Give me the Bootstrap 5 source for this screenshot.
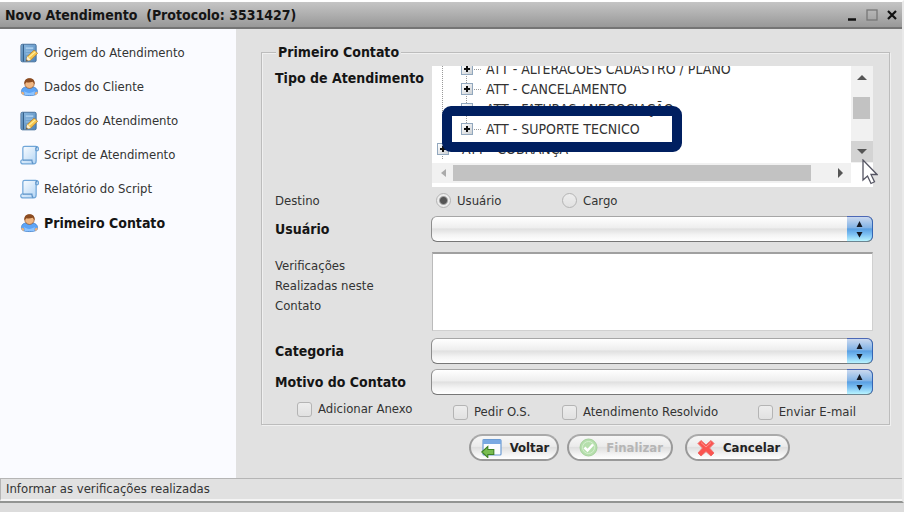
<!DOCTYPE html>
<html lang="pt-BR">
<head>
<meta charset="utf-8">
<meta name="viewport" content="width=device-width, initial-scale=1">
<title>Novo Atendimento</title>
<link href="https://cdn.jsdelivr.net/npm/bootstrap@5.3.0/dist/css/bootstrap.min.css" rel="stylesheet">
<style>
body{background:#dcdcdc;color:#333;font:13px/20px "DejaVu Sans Condensed","DejaVu Sans",sans-serif}
b,.fw-bold{color:#151515;font-size:14px}
.app-window{background:#e1e1e1;border-top:2px solid #fff;border-right:2px solid #e9e9e9;border-bottom:2px solid #929492}
.title-bar{height:27px;padding:0 2px 0 5px;background:linear-gradient(#c5c5c5,#989898);border-bottom:2px solid #747474}
.title-bar h1{line-height:20px;white-space:pre}
.title-bar button{width:16px;height:20px;line-height:0;color:#111}
.side{width:236px;background:#fafbff;padding-top:7px}
.side a{height:34px;padding-left:20px;gap:5px;color:#333;text-decoration:none}
.content-area{padding:13px 12px 17px 25px}
.group-box{border:1px solid #bcbcbc;box-shadow:inset 1px 1px #f0f0f0,1px 1px #f0f0f0;padding:4px 16px 2px 13px}
.group-box legend{float:none;width:auto;line-height:20px;margin:0 0 0 1px;padding:0 2px;background:#e1e1e1}
.field-label{width:157px;flex:none}
.top-label{padding-top:2px}
.tree-panel{background:#fff;padding-bottom:4px}
.tree-row{height:97px}
.tree-view{overflow:hidden;font-size:14px}
.tree-view ul{margin-top:-7px;position:relative}
.tree-view li{height:20px;padding-left:29px;white-space:nowrap}
.tree-view li.parent-node{padding-left:5px}
.tree-view ul::before,.tree-view ul::after{content:"";position:absolute;top:0;bottom:0;left:10px;border-left:1px dotted #999}
.tree-view ul::after{left:34px;bottom:30px}
.toggle{width:12px;height:12px;border:1px solid #92a8be;background:linear-gradient(135deg,#fff,#ccd0d4);line-height:0;z-index:1;color:#111}
.stub{width:7px;border-top:1px dotted #999;margin:0 5px 0 1px}
.vbar{width:22px;background:#f1f1f1}
.vbar button,.hbar button{height:21px;width:21px;line-height:0;color:#555}
.vbar .down{background:#d3d3d3;width:22px}
.vthumb{height:22px;margin:10px 3px 22px 2px;background:#c2c2c2}
.hbar{height:20px;background:#f1f1f1;margin-right:22px}
.hbar button{height:20px}
.hthumb{height:16px;background:#c2c2c2;margin-right:19px}
.highlight{top:40px;left:10px;width:240px;height:46px;border:10px solid #001f60;border-radius:9px;z-index:2}
.pointer{right:-5px;top:93px;z-index:3;pointer-events:none}
.destino{height:27px;margin-bottom:2px}
.gap-s{margin-bottom:5px}
.gap-m{margin-bottom:7px}
.gap-l{margin-bottom:10px}
.mac-select{height:26px;border:1px solid #8d8d8d;border-color:#a6a6a6 #8d8d8d #777;border-radius:6px;appearance:none;background:linear-gradient(#fff,#eee 45%,#e0e0e0 50%,#f4f4f4 75%,#fff);margin-left:-1px;width:calc(100% + 1px)}
.stepper{width:26px;background:linear-gradient(#cbd9ef,#84b4e6 44%,#5a9fe2 50%,#7cc0f3 72%,#b8f4ff);border:1px solid #4c68b6;border-left:0;border-bottom-color:#6c8490;border-right-color:#3465b5;border-radius:0 6px 6px 0;pointer-events:none}
.notes{height:79px;resize:none;background:#fff;border:1px solid #d0d0d0;border-top:2px solid #a0a0a0;border-left-color:#bbb}
.tick{appearance:none;width:15px;height:15px;margin:0;border:1px solid #b4b4b4;border-radius:3px;background:linear-gradient(#ededed,#e1e1e1);flex:none}
.tick:checked{background:#444}
.tick[type=radio]{border-radius:50%}
.tick[type=radio]:checked{background:radial-gradient(circle,#555 0 3px,#ececec 5px)}
.ticks{gap:6px}
.checks{padding-top:4px}
.col-a{width:130px}.col-b{width:109px}.col-c{flex:1}
.extra{padding:3px 17px 0 21px}
.attach{padding-left:22px}
.actions{padding:9px 0 0 108px}
.pill{height:27px;border:2px solid #999;border-top-color:#aaa;border-radius:14px;background:linear-gradient(#f7f7f7,#ebebeb 45%,#dfdfdf 50%,#f0f0f0 75%,#fff);font-weight:bold;line-height:20px;color:#222;padding:0 8px 0 10px;gap:8px}
.pill:disabled{color:#b5b5b5}
.status{border:1px solid #b5b5b5;border-width:1px 0 0 1px;border-bottom:2px solid #f4f4f4;height:23px;padding-left:5px}
</style>
<script src="https://cdn.jsdelivr.net/npm/bootstrap@5.3.0/dist/js/bootstrap.bundle.min.js"></script>
</head>
<body>
<svg class="position-absolute" width="0" height="0" aria-hidden="true">
<defs>
<linearGradient id="book" x2="1" y2="1"><stop stop-color="#8fbce3"/><stop offset="1" stop-color="#4d83b8"/></linearGradient>
<linearGradient id="sheet" x2="1" y2="1"><stop stop-color="#fff"/><stop offset="1" stop-color="#acd1f4"/></linearGradient>
</defs>
<symbol id="i-note" viewBox="0 0 20 20"><rect x="1" y=".8" width="16" height="18.5" rx="1.5" fill="url(#book)" stroke="#426d98"/><path d="M3.500 1v18" stroke="#315b85" stroke-width="1.300"/><path d="M6 4h8v2H6z" fill="#a9cdec"/><path d="M6 8h8M6 11h5" stroke="#9cc4e6"/><path d="M6.500 18.500l1.300-5 7-6.500 3.800 3.300-7.200 7z" fill="#f6c64e" stroke="#b47b2b" stroke-width=".8"/><path d="M6.500 18.500l1.300-5 3.600 3.800z" fill="#fff0ce"/><path d="M6.400 18.600l.6-2 1.300 1.300z" fill="#333"/><path d="M9.500 14.500l6.800-6" stroke="#fff0a0" stroke-width="1.200"/></symbol>
<symbol id="i-user" viewBox="0 0 20 20"><path d="M1.500 15c0-4 3-5 5.500-5h6c3 0 5.500 2 5.500 5 0 3-3 4-8.500 4s-8.500-1-8.500-4z" fill="#5da4f5" stroke="#3e7fcb" stroke-width=".8"/><path d="M4.500 14c2 3 8 3 11 0l-.5 4.500h-10z" fill="#8dc4ff"/><path d="M1.500 15c1-.5 3 .5 3 2 0 1-1 1.300-2 1-.8-.5-1.200-2-1-3zM18.500 15c-1-.5-3 .5-3 2 0 1 1 1.300 2 1 .8-.5 1.200-2 1-3z" fill="#eeb177"/><circle cx="10" cy="6.500" r="5" fill="#f0b783" stroke="#8c4c20" stroke-width=".7"/><path d="M4.700 7C4 2.500 7 .8 10 .8S16 2.500 15.300 7c-1-.5-1-2-2-2.500-2.500 1-5 1-6.500.5-.8.500-1 1.500-2.100 2z" fill="#8b4b20"/></symbol>
<symbol id="i-script" viewBox="0 0 20 20"><path d="M3 2.500C3 1.500 4 .8 5 .8h11.500c2 0 3 1.200 3 3 0 1.500-1 2-2.500 1.700V16c0 2-.8 3.300-2.500 3.300H3.200C1.200 19.300.8 18 .8 17s.7-2 2.200-1.800z" fill="url(#sheet)" stroke="#70a6d8" stroke-width="1.300"/><path d="M3 15.500h9.500c0 2 .5 3 1.500 3.700M17 5.500c-.8-2 0-3.500 1-4" fill="none" stroke="#5b91c6" stroke-width="1.300"/></symbol>
<symbol id="i-plus" viewBox="0 0 10 10"><path d="M5 2v6M2 5h6" stroke="currentColor" stroke-width="2"/></symbol>
<symbol id="i-step" viewBox="0 0 9 17"><path d="M4.500 0l3 6h-6zM1.500 11h6l-3 5.500z" fill="#151a25"/></symbol>
</svg>

<div class="app-window">
  <header class="title-bar d-flex align-items-center">
    <h1 class="fw-bold m-0 me-auto">Novo Atendimento  (Protocolo: 3531427)</h1>
    <button class="btn p-0 border-0" aria-label="Minimizar"><svg width="12" height="12"><path d="M2 10.500h8" stroke="currentColor" stroke-width="2.500"/></svg></button>
    <button class="btn p-0 border-0 mx-1" aria-label="Maximizar"><svg width="12" height="12"><rect x="1" y="1" width="10" height="10" fill="none" stroke="#777" stroke-width="1.300"/></svg></button>
    <button class="btn p-0 border-0" aria-label="Fechar"><svg width="12" height="12"><path d="M2 2l8 8M10 2l-8 8" stroke="currentColor" stroke-width="2.200"/></svg></button>
  </header>

  <div class="d-flex">
    <nav class="side d-flex flex-column flex-shrink-0">
      <a href="#" class="d-flex align-items-center"><svg width="19" height="20"><use href="#i-note"/></svg>Origem do Atendimento</a>
      <a href="#" class="d-flex align-items-center"><svg width="19" height="20"><use href="#i-user"/></svg>Dados do Cliente</a>
      <a href="#" class="d-flex align-items-center"><svg width="19" height="20"><use href="#i-note"/></svg>Dados do Atendimento</a>
      <a href="#" class="d-flex align-items-center"><svg width="19" height="20"><use href="#i-script"/></svg>Script de Atendimento</a>
      <a href="#" class="d-flex align-items-center"><svg width="19" height="20"><use href="#i-script"/></svg>Relatório do Script</a>
      <a href="#" class="d-flex align-items-center" aria-current="page"><svg width="19" height="20"><use href="#i-user"/></svg><b>Primeiro Contato</b></a>
    </nav>

    <main class="content-area flex-grow-1">
      <form>
      <fieldset class="group-box">
        <legend class="fw-bold">Primeiro Contato</legend>
        <div class="d-flex">
          <b class="field-label top-label" id="tipo">Tipo de Atendimento</b>
          <div class="tree-panel flex-grow-1 position-relative" aria-labelledby="tipo">
            <div class="tree-row d-flex">
              <div class="tree-view flex-grow-1">
                <ul class="list-unstyled mb-0">
                  <li class="d-flex align-items-center"><button type="button" class="toggle p-0" aria-label="Expandir"><svg width="10" height="10"><use href="#i-plus"/></svg></button><span class="stub"></span>ATT - ALTERACOES CADASTRO / PLANO</li>
                  <li class="d-flex align-items-center"><button type="button" class="toggle p-0" aria-label="Expandir"><svg width="10" height="10"><use href="#i-plus"/></svg></button><span class="stub"></span>ATT - CANCELAMENTO</li>
                  <li class="d-flex align-items-center"><button type="button" class="toggle p-0" aria-label="Expandir"><svg width="10" height="10"><use href="#i-plus"/></svg></button><span class="stub"></span>ATT - FATURAS / NEGOCIAÇÃO</li>
                  <li class="d-flex align-items-center"><button type="button" class="toggle p-0" aria-label="Expandir"><svg width="10" height="10"><use href="#i-plus"/></svg></button><span class="stub"></span>ATT - SUPORTE TECNICO</li>
                  <li class="parent-node d-flex align-items-center"><button type="button" class="toggle p-0" aria-label="Expandir"><svg width="10" height="10"><use href="#i-plus"/></svg></button><span class="stub"></span>ATT - COBRANÇA</li>
                </ul>
              </div>
              <div class="vbar d-flex flex-column">
                <button type="button" class="btn p-0 border-0 rounded-0" aria-label="Rolar para cima"><svg width="10" height="6"><path d="M0 6l5-5 5 5z" fill="currentColor"/></svg></button>
                <div class="vthumb"></div>
                <button type="button" class="down btn p-0 border-0 rounded-0" aria-label="Rolar para baixo"><svg width="10" height="6"><path d="M0 0l5 5 5-5z" fill="currentColor"/></svg></button>
              </div>
            </div>
            <div class="hbar d-flex align-items-center">
              <button type="button" class="btn p-0 border-0 rounded-0" aria-label="Rolar à esquerda"><svg width="6" height="10"><path d="M6 1v8L1 5z" fill="#aaa"/></svg></button>
              <div class="hthumb flex-grow-1"></div>
              <button type="button" class="btn p-0 border-0 rounded-0" aria-label="Rolar à direita"><svg width="6" height="10"><path d="M0 0v10l5-5z" fill="currentColor"/></svg></button>
            </div>
            <div class="highlight position-absolute"></div>
            <svg class="pointer position-absolute" width="16" height="26" viewBox="0 0 16 26"><path d="M1 1v20l4.500-4 3.500 7.500 3.500-1.700L9 15.500h6z" fill="#fff" stroke="#555563" stroke-width="1.300"/></svg>
          </div>
        </div>

        <div class="destino d-flex align-items-center">
          <span class="field-label">Destino</span>
          <div class="col-a d-flex align-items-center ticks ps-1"><input class="tick" type="radio" name="destino" id="r1" checked><label for="r1">Usuário</label></div>
          <div class="d-flex align-items-center ticks"><input class="tick" type="radio" name="destino" id="r2"><label for="r2">Cargo</label></div>
        </div>

        <div class="d-flex align-items-center gap-l">
          <label for="usuario" class="field-label fw-bold">Usuário</label>
          <div class="flex-grow-1 position-relative"><select id="usuario" class="mac-select d-block"><option></option></select><span class="stepper position-absolute top-0 end-0 h-100 d-flex align-items-center justify-content-center"><svg width="9" height="17"><use href="#i-step"/></svg></span></div>
        </div>

        <div class="d-flex gap-m">
          <label for="verif" class="field-label pt-1">Verificações<br>Realizadas neste<br>Contato</label>
          <textarea id="verif" class="notes flex-grow-1"></textarea>
        </div>

        <div class="d-flex align-items-center gap-s">
          <label for="categoria" class="field-label fw-bold">Categoria</label>
          <div class="flex-grow-1 position-relative"><select id="categoria" class="mac-select d-block"><option></option></select><span class="stepper position-absolute top-0 end-0 h-100 d-flex align-items-center justify-content-center"><svg width="9" height="17"><use href="#i-step"/></svg></span></div>
        </div>

        <div class="d-flex align-items-center">
          <label for="motivo" class="field-label fw-bold">Motivo do Contato</label>
          <div class="flex-grow-1 position-relative"><select id="motivo" class="mac-select d-block"><option></option></select><span class="stepper position-absolute top-0 end-0 h-100 d-flex align-items-center justify-content-center"><svg width="9" height="17"><use href="#i-step"/></svg></span></div>
        </div>

        <div class="checks d-flex">
          <div class="field-label attach d-flex ticks align-items-center align-self-start text-nowrap"><input class="tick" type="checkbox" id="c1"><label for="c1">Adicionar Anexo</label></div>
          <div class="extra d-flex flex-grow-1">
            <div class="col-b d-flex align-items-center ticks"><input class="tick" type="checkbox" id="c2"><label for="c2">Pedir O.S.</label></div>
            <div class="col-c d-flex align-items-center ticks"><input class="tick" type="checkbox" id="c3"><label for="c3">Atendimento Resolvido</label></div>
            <div class="d-flex align-items-center ticks"><input class="tick" type="checkbox" id="c4"><label for="c4">Enviar E-mail</label></div>
          </div>
        </div>
      </fieldset>

      <div class="actions d-flex justify-content-center">
        <button type="button" class="pill d-flex align-items-center me-2"><svg width="21" height="20"><rect x="2" y="1.500" width="18" height="15.500" rx="1" fill="#fbfdff" stroke="#6d9cd3" stroke-width="1.200"/><path d="M2 2h18v4H2z" fill="#79a9e2"/><path d="M.8 14l6-5.500v3h6v5h-6v3z" fill="#79bd50" stroke="#3f8126" stroke-width="1.100"/></svg>Voltar</button>
        <button type="button" class="pill d-flex align-items-center me-2" disabled><svg width="19" height="19"><circle cx="9.500" cy="9.500" r="8.500" fill="#b5dfac" stroke="#a6d09d"/><circle cx="9.500" cy="9.500" r="6" fill="none" stroke="#d5efd0"/><path d="M5.500 9.500l3 3 5.500-6" fill="none" stroke="#fff" stroke-width="2.500"/></svg>Finalizar</button>
        <button type="button" class="pill d-flex align-items-center ms-1"><svg width="18" height="18"><path d="M4 1.500l5 4.500 5-4.500 3 3L12.500 9l4.500 5-3 3-5-4.500L4 17l-3-3 4.500-5L1 4.500z" fill="#fb5450" stroke="#ee6e6b" stroke-linejoin="round"/><path d="M4 3.500l5 4.500 5-4.500" fill="none" stroke="#ff9690"/></svg>Cancelar</button>
      </div>
      </form>
    </main>
  </div>
  <footer class="status d-flex align-items-center">Informar as verificações realizadas</footer>
</div>
</body>
</html>
